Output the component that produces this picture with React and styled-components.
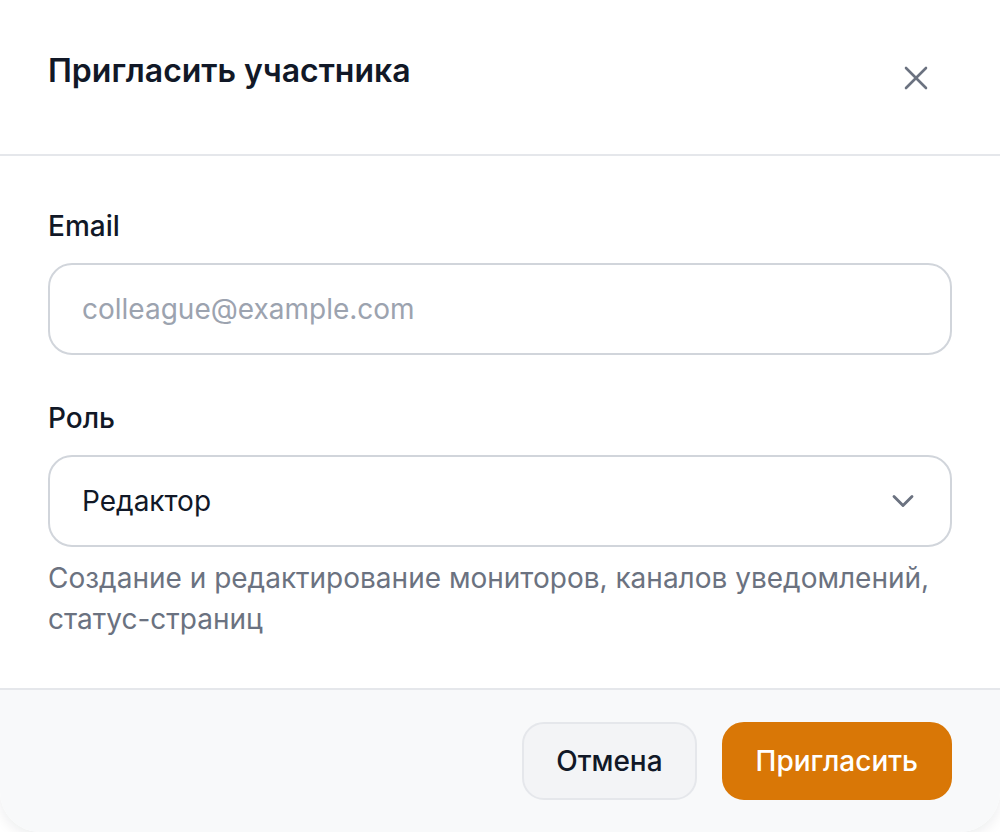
import React from "react"
import styled, { createGlobalStyle } from "styled-components"

const GlobalStyle = createGlobalStyle`
  * { box-sizing: border-box; }
  html, body {
    margin: 0;
    padding: 0;
    background: #ffffff;
    font-family: Inter, "Noto Sans", "Liberation Sans", sans-serif;
    color: #111827;
  }
`

const Modal = styled.div`
  width: 1000px;
  height: 832px;
  display: flex;
  flex-direction: column;
  background: #ffffff;
  border-radius: 0 0 40px 40px;
  overflow: hidden;
  box-shadow: 0 4px 14px rgba(17, 24, 39, 0.08);
`

const Header = styled.div`
  height: 156px;
  display: flex;
  justify-content: space-between;
  align-items: flex-start;
  padding: 51px 62px 0 48px;
  border-bottom: 2px solid #e5e7eb;
`

const Title = styled.h2`
  margin: 0;
  font-size: 32px;
  line-height: 40px;
  font-weight: 600;
  color: #111827;
`

const CloseButton = styled.button`
  width: 44px;
  height: 44px;
  margin-top: 5px;
  border: 0;
  background: none;
  padding: 0;
  display: flex;
  align-items: center;
  justify-content: center;
  color: #6b7280;
  cursor: pointer;
`

const Body = styled.div`
  flex: 1;
  padding: 54px 48px 0 48px;
  display: flex;
  flex-direction: column;
`

const Field = styled.div`
  display: flex;
  flex-direction: column;
  margin-bottom: ${(p) => p.$gap || 0}px;
`

const Label = styled.label`
  font-size: 28px;
  line-height: 32px;
  font-weight: 500;
  color: #111827;
  margin-bottom: 21px;
`

const Input = styled.input`
  height: 92px;
  width: 100%;
  border: 2px solid #d1d5db;
  border-radius: 24px;
  padding: 0 32px;
  font-family: inherit;
  font-size: 28px;
  color: #111827;
  outline: none;
  background: #fff;

  &::placeholder {
    color: #9ca3af;
  }
`

const Select = styled.div`
  height: 92px;
  width: 100%;
  border: 2px solid #d1d5db;
  border-radius: 24px;
  padding: 0 29px 0 32px;
  display: flex;
  align-items: center;
  justify-content: space-between;
  font-size: 28px;
  color: #111827;
  background: #fff;
`

const Hint = styled.p`
  margin: 11px 0 0 0;
  font-size: 28px;
  line-height: 41px;
  color: #6b7280;
`

const Footer = styled.div`
  height: 144px;
  background: #f8f9fa;
  border-top: 2px solid #e5e7eb;
  display: flex;
  justify-content: flex-end;
  align-items: flex-start;
  gap: 25px;
  padding: 32px 48px 0 48px;
`

const Button = styled.button`
  height: 78px;
  padding: 0 32px;
  border-radius: 22px;
  font-family: inherit;
  font-size: 28px;
  font-weight: 500;
  cursor: pointer;
  border: 2px solid ${(p) => (p.$primary ? "#d97706" : "#e5e7eb")};
  background: ${(p) => (p.$primary ? "#d97706" : "#f3f4f6")};
  color: ${(p) => (p.$primary ? "#ffffff" : "#111827")};
`

const App = () => {
  return (
    <>
      <GlobalStyle />
      <Modal>
        <Header>
          <Title>Пригласить участника</Title>
          <CloseButton aria-label="Закрыть">
            <svg width="24" height="24" viewBox="0 0 24 24" fill="none" stroke="currentColor" strokeWidth="2.6" strokeLinecap="round">
              <path d="M2 2 22 22" />
              <path d="M22 2 2 22" />
            </svg>
          </CloseButton>
        </Header>
        <Body>
          <Field $gap={47}>
            <Label>Email</Label>
            <Input placeholder="colleague@example.com" />
          </Field>
          <Field>
            <Label>Роль</Label>
            <Select>
              <span>Редактор</span>
              <svg width="36" height="36" viewBox="0 0 24 24" fill="none" stroke="#6b7280" strokeWidth="1.9" strokeLinecap="round" strokeLinejoin="round">
                <path d="m6 9 6 6 6-6" />
              </svg>
            </Select>
            <Hint>Создание и редактирование мониторов, каналов уведомлений, статус-страниц</Hint>
          </Field>
        </Body>
        <Footer>
          <Button>Отмена</Button>
          <Button $primary>Пригласить</Button>
        </Footer>
      </Modal>
    </>
  )
}

export default App
